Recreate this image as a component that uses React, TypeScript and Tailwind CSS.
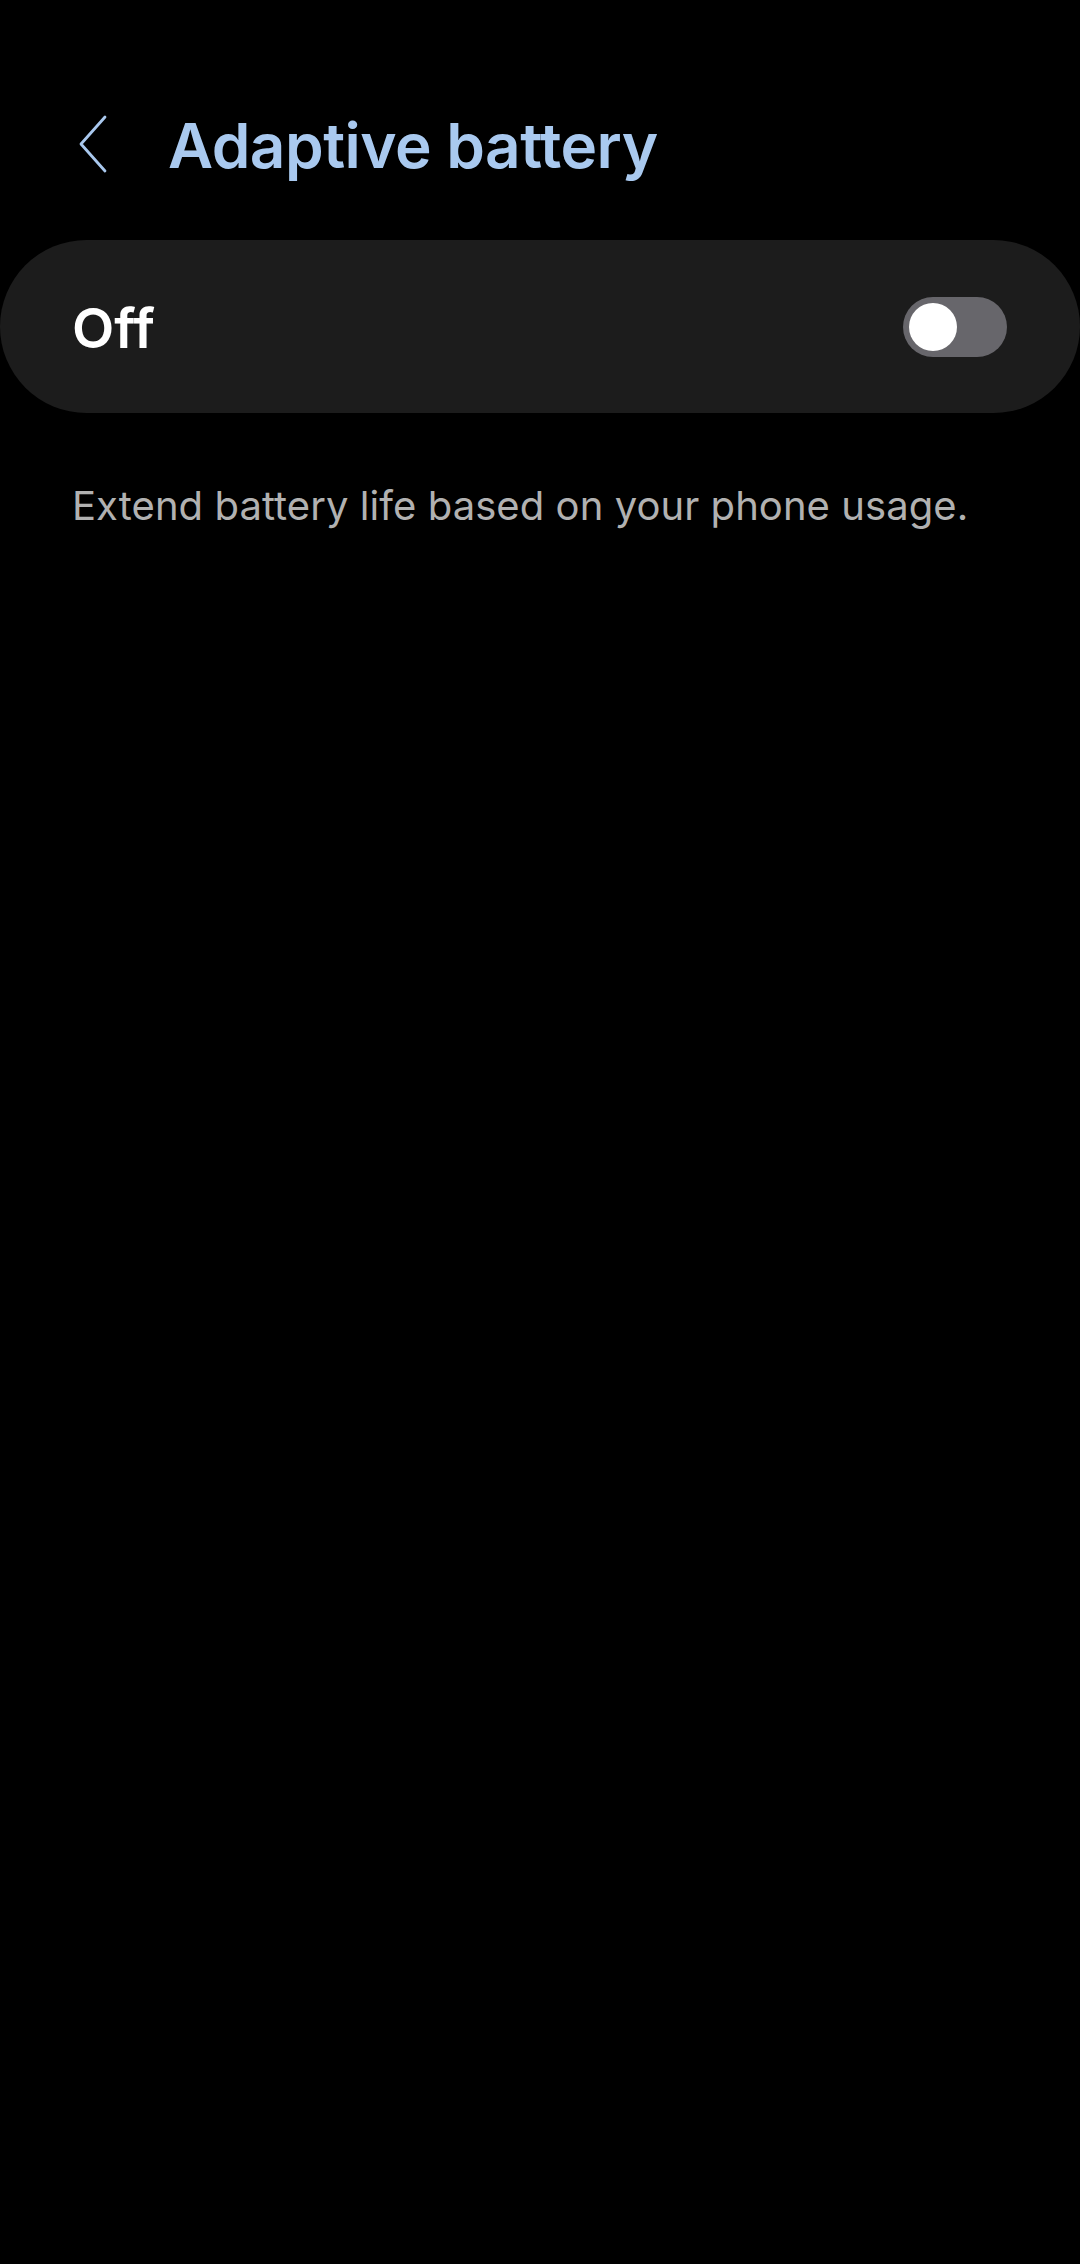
import React from "react";

const font = { fontFamily: "Inter, Roboto, 'Noto Sans', sans-serif" };

function BackChevron() {
  return (
    <svg width="32" height="58" viewBox="0 0 32 58" fill="none">
      <path
        d="M28 2 L4 29 L28 56"
        stroke="#a9c8ee"
        strokeWidth="2.8"
        strokeLinecap="round"
        strokeLinejoin="round"
      />
    </svg>
  );
}

function Toggle() {
  return (
    <div className="w-[104px] h-[60px] rounded-full bg-[#67666b] flex items-center px-[6px]">
      <div className="w-[48px] h-[48px] rounded-full bg-white" />
    </div>
  );
}

export default function App() {
  return (
    <div className="w-[1080px] h-[2264px] bg-black overflow-hidden" style={font}>
      {/* top bar */}
      <div className="flex items-center h-[88px] mt-[100px] pl-[77px]">
        <BackChevron />
        <h1 className="ml-[59px] mt-[4px] text-[62px] font-semibold text-[#a9c9ef] tracking-[-0.5px] leading-none">
          Adaptive battery
        </h1>
      </div>

      {/* master switch */}
      <div className="mt-[52px] h-[173px] rounded-full bg-[#1c1c1c] flex items-center justify-between pl-[72px] pr-[73px]">
        <span className="mt-[4px] text-[55px] font-semibold text-white leading-none">Off</span>
        <Toggle />
      </div>

      {/* description */}
      <p className="mt-[69px] pl-[72px] text-[40px] text-[#b1b1b1] leading-[48px] tracking-[0.06px]">
        Extend battery life based on your phone usage.
      </p>
    </div>
  );
}
